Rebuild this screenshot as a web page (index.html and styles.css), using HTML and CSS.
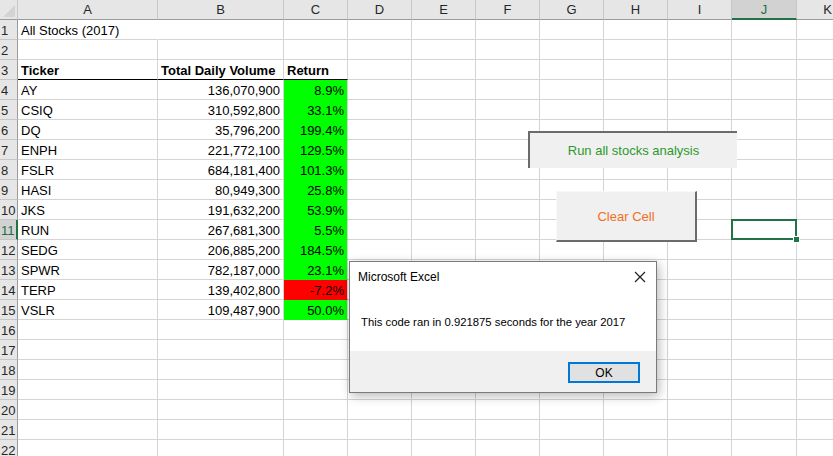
FILE: index.html
```html
<!DOCTYPE html>
<html>
<head>
<meta charset="utf-8">
<link rel="stylesheet" href="styles.css">
</head>
<body>
<div class="sheet">
  <div class="row head">
    <div class="corner"><svg width="17" height="19" viewBox="0 0 17 19"><polygon points="15,5 15,17 3,17" fill="#d3d3d3"/></svg></div>
    <div class="ch">A</div><div class="ch">B</div><div class="ch">C</div><div class="ch">D</div><div class="ch">E</div><div class="ch">F</div><div class="ch">G</div><div class="ch">H</div><div class="ch">I</div><div class="ch sel">J</div><div class="ch">K</div>
  </div>
  <div class="row"><div class="rh">1</div><div class="c ov">All Stocks (2017)</div><div class="c"></div><div class="c"></div><div class="c"></div><div class="c"></div><div class="c"></div><div class="c"></div><div class="c"></div><div class="c"></div><div class="c"></div><div class="c"></div></div>
  <div class="row"><div class="rh">2</div><div class="c"></div><div class="c"></div><div class="c"></div><div class="c"></div><div class="c"></div><div class="c"></div><div class="c"></div><div class="c"></div><div class="c"></div><div class="c"></div><div class="c"></div></div>
  <div class="row"><div class="rh">3</div><div class="c b ul">Ticker</div><div class="c b ul">Total Daily Volume</div><div class="c b ul">Return</div><div class="c"></div><div class="c"></div><div class="c"></div><div class="c"></div><div class="c"></div><div class="c"></div><div class="c"></div><div class="c"></div></div>
  <div class="row"><div class="rh">4</div><div class="c">AY</div><div class="c n">136,070,900</div><div class="c n g">8.9%</div><div class="c"></div><div class="c"></div><div class="c"></div><div class="c"></div><div class="c"></div><div class="c"></div><div class="c"></div><div class="c"></div></div>
  <div class="row"><div class="rh">5</div><div class="c">CSIQ</div><div class="c n">310,592,800</div><div class="c n g">33.1%</div><div class="c"></div><div class="c"></div><div class="c"></div><div class="c"></div><div class="c"></div><div class="c"></div><div class="c"></div><div class="c"></div></div>
  <div class="row"><div class="rh">6</div><div class="c">DQ</div><div class="c n">35,796,200</div><div class="c n g">199.4%</div><div class="c"></div><div class="c"></div><div class="c"></div><div class="c"></div><div class="c"></div><div class="c"></div><div class="c"></div><div class="c"></div></div>
  <div class="row"><div class="rh">7</div><div class="c">ENPH</div><div class="c n">221,772,100</div><div class="c n g">129.5%</div><div class="c"></div><div class="c"></div><div class="c"></div><div class="c"></div><div class="c"></div><div class="c"></div><div class="c"></div><div class="c"></div></div>
  <div class="row"><div class="rh">8</div><div class="c">FSLR</div><div class="c n">684,181,400</div><div class="c n g">101.3%</div><div class="c"></div><div class="c"></div><div class="c"></div><div class="c"></div><div class="c"></div><div class="c"></div><div class="c"></div><div class="c"></div></div>
  <div class="row"><div class="rh">9</div><div class="c">HASI</div><div class="c n">80,949,300</div><div class="c n g">25.8%</div><div class="c"></div><div class="c"></div><div class="c"></div><div class="c"></div><div class="c"></div><div class="c"></div><div class="c"></div><div class="c"></div></div>
  <div class="row"><div class="rh">10</div><div class="c">JKS</div><div class="c n">191,632,200</div><div class="c n g">53.9%</div><div class="c"></div><div class="c"></div><div class="c"></div><div class="c"></div><div class="c"></div><div class="c"></div><div class="c"></div><div class="c"></div></div>
  <div class="row"><div class="rh sel">11</div><div class="c">RUN</div><div class="c n">267,681,300</div><div class="c n g">5.5%</div><div class="c"></div><div class="c"></div><div class="c"></div><div class="c"></div><div class="c"></div><div class="c"></div><div class="c active"><span class="handle"></span></div><div class="c"></div></div>
  <div class="row"><div class="rh">12</div><div class="c">SEDG</div><div class="c n">206,885,200</div><div class="c n g">184.5%</div><div class="c"></div><div class="c"></div><div class="c"></div><div class="c"></div><div class="c"></div><div class="c"></div><div class="c"></div><div class="c"></div></div>
  <div class="row"><div class="rh">13</div><div class="c">SPWR</div><div class="c n">782,187,000</div><div class="c n g">23.1%</div><div class="c"></div><div class="c"></div><div class="c"></div><div class="c"></div><div class="c"></div><div class="c"></div><div class="c"></div><div class="c"></div></div>
  <div class="row"><div class="rh">14</div><div class="c">TERP</div><div class="c n">139,402,800</div><div class="c n red">-7.2%</div><div class="c"></div><div class="c"></div><div class="c"></div><div class="c"></div><div class="c"></div><div class="c"></div><div class="c"></div><div class="c"></div></div>
  <div class="row"><div class="rh">15</div><div class="c">VSLR</div><div class="c n">109,487,900</div><div class="c n g">50.0%</div><div class="c"></div><div class="c"></div><div class="c"></div><div class="c"></div><div class="c"></div><div class="c"></div><div class="c"></div><div class="c"></div></div>
  <div class="row"><div class="rh">16</div><div class="c"></div><div class="c"></div><div class="c"></div><div class="c"></div><div class="c"></div><div class="c"></div><div class="c"></div><div class="c"></div><div class="c"></div><div class="c"></div><div class="c"></div></div>
  <div class="row"><div class="rh">17</div><div class="c"></div><div class="c"></div><div class="c"></div><div class="c"></div><div class="c"></div><div class="c"></div><div class="c"></div><div class="c"></div><div class="c"></div><div class="c"></div><div class="c"></div></div>
  <div class="row"><div class="rh">18</div><div class="c"></div><div class="c"></div><div class="c"></div><div class="c"></div><div class="c"></div><div class="c"></div><div class="c"></div><div class="c"></div><div class="c"></div><div class="c"></div><div class="c"></div></div>
  <div class="row"><div class="rh">19</div><div class="c"></div><div class="c"></div><div class="c"></div><div class="c"></div><div class="c"></div><div class="c"></div><div class="c"></div><div class="c"></div><div class="c"></div><div class="c"></div><div class="c"></div></div>
  <div class="row"><div class="rh">20</div><div class="c"></div><div class="c"></div><div class="c"></div><div class="c"></div><div class="c"></div><div class="c"></div><div class="c"></div><div class="c"></div><div class="c"></div><div class="c"></div><div class="c"></div></div>
  <div class="row"><div class="rh">21</div><div class="c"></div><div class="c"></div><div class="c"></div><div class="c"></div><div class="c"></div><div class="c"></div><div class="c"></div><div class="c"></div><div class="c"></div><div class="c"></div><div class="c"></div></div>
  <div class="row"><div class="rh">22</div><div class="c"></div><div class="c"></div><div class="c"></div><div class="c"></div><div class="c"></div><div class="c"></div><div class="c"></div><div class="c"></div><div class="c"></div><div class="c"></div><div class="c"></div></div>

  <div class="btn run">Run all stocks analysis</div>
  <div class="btn clear">Clear Cell</div>

  <div class="dialog">
    <div class="dlg-title">
      <span>Microsoft Excel</span>
      <svg class="x" width="12" height="12" viewBox="0 0 12 12"><path d="M1 1L11 11M11 1L1 11" stroke="#1a1a1a" stroke-width="1.1" fill="none"/></svg>
    </div>
    <div class="dlg-msg">This code ran in 0.921875 seconds for the year 2017</div>
    <div class="dlg-foot"><div class="ok">OK</div></div>
  </div>
</div>
</body>
</html>
```
FILE: styles.css
```css
html, body {
  margin: 0;
  padding: 0;
  background: #fff;
  overflow: hidden;
}
.sheet {
  position: relative;
  width: 833px;
  height: 456px;
  overflow: hidden;
  font-family: "Liberation Sans", Arial, sans-serif;
  font-size: 13px;
  color: #000;
}
.row {
  display: grid;
  grid-template-columns: 18px 140px 126px 64px 64px 64px 64px 64px 64px 64px 65px 62px;
  height: 20px;
}
.row > div {
  box-sizing: border-box;
  height: 20px;
  border-right: 1px solid #d4d4d4;
  border-bottom: 1px solid #d4d4d4;
  white-space: nowrap;
  line-height: 21px;
}
.head > div {
  background: #e6e6e6;
  border-right: 1px solid #c6c6c6;
  border-bottom: 1px solid #9b9b9b;
  text-align: center;
  color: #262626;
  line-height: 20px;
}
.head .corner {
  padding: 0;
  line-height: 0;
}
.head .ch.sel {
  background: #d2d2d2;
  color: #1e6e43;
  border-bottom: 2px solid #217346;
}
.rh {
  background: #e6e6e6;
  border-right: 1px solid #9b9b9b !important;
  border-bottom: 1px solid #c6c6c6 !important;
  color: #262626;
  padding-left: 1px;
  overflow: visible;
}
.rh.sel {
  background: #d2d2d2;
  color: #1e6e43;
  border-right: 2px solid #217346 !important;
}
.c {
  padding: 0 3px;
  overflow: hidden;
}
.c.ov {
  overflow: visible;
  border-right-color: transparent !important;
}
.c.b {
  font-weight: bold;
}
.c.ul {
  border-bottom: 1px solid #000 !important;
}
.c.n {
  text-align: right;
}
.c.g {
  background: #00ff00;
  border-bottom-color: #00ff00 !important;
}
.c.red {
  background: #ff0000;
  border-bottom-color: #ff0000 !important;
}
.c.active {
  position: relative;
  overflow: visible;
}
.c.active::before {
  content: "";
  position: absolute;
  left: -1px;
  top: -1px;
  right: -1px;
  bottom: -1px;
  border: 2px solid #217346;
}
.handle {
  position: absolute;
  right: -4px;
  bottom: -4px;
  width: 5px;
  height: 5px;
  background: #217346;
  border: 1px solid #fff;
}

.btn {
  position: absolute;
  box-sizing: border-box;
  background: #f0f0f0;
  display: flex;
  align-items: center;
  justify-content: center;
  font-size: 13px;
}
.btn.run {
  left: 528px;
  top: 131px;
  width: 209px;
  height: 37px;
  border-top: 2px solid #6b6b6b;
  border-left: 2px solid #6b6b6b;
  color: #2b9a2b;
  padding-bottom: 1px;
}
.btn.clear {
  left: 556px;
  top: 191px;
  width: 141px;
  height: 51px;
  border-right: 2px solid #6b6b6b;
  border-bottom: 2px solid #6b6b6b;
  border-top: 1px solid #f8f8f8;
  border-left: 1px solid #f8f8f8;
  color: #f26d1f;
}

.dialog {
  position: absolute;
  left: 349px;
  top: 261px;
  width: 308px;
  height: 132px;
  box-sizing: border-box;
  border: 1px solid #7a7a7a;
  background: #fff;
  box-shadow: 2px 3px 10px rgba(0, 0, 0, 0.28);
  display: flex;
  flex-direction: column;
  font-family: "Liberation Sans", Arial, sans-serif;
}
.dlg-title {
  height: 30px;
  display: flex;
  align-items: center;
  justify-content: space-between;
  padding: 0 10px 0 8px;
  font-size: 12px;
  color: #000;
}
.dlg-msg {
  flex: 1;
  font-size: 11.3px;
  color: #000;
  padding: 24px 0 0 11px;
}
.dlg-foot {
  height: 41px;
  background: #f0f0f0;
  display: flex;
  justify-content: flex-end;
  align-items: flex-start;
  padding: 11px 16px 0 0;
  box-sizing: border-box;
}
.ok {
  width: 72px;
  height: 21px;
  box-sizing: border-box;
  border: 2px solid #0078d7;
  background: #e1e1e1;
  font-size: 12px;
  display: flex;
  align-items: center;
  justify-content: center;
}
```
